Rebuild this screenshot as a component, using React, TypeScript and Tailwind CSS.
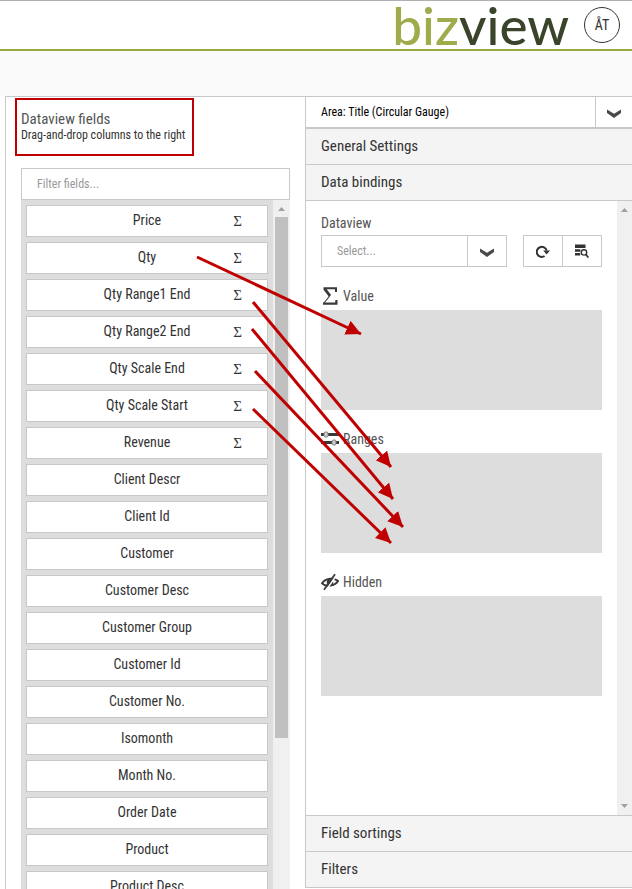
import React, { useState } from 'react';

interface Field {
  name: string;
  numeric?: boolean;
}

const FIELDS: Field[] = [
  { name: 'Price', numeric: true },
  { name: 'Qty', numeric: true },
  { name: 'Qty Range1 End', numeric: true },
  { name: 'Qty Range2 End', numeric: true },
  { name: 'Qty Scale End', numeric: true },
  { name: 'Qty Scale Start', numeric: true },
  { name: 'Revenue', numeric: true },
  { name: 'Client Descr' },
  { name: 'Client Id' },
  { name: 'Customer' },
  { name: 'Customer Desc' },
  { name: 'Customer Group' },
  { name: 'Customer Id' },
  { name: 'Customer No.' },
  { name: 'Isomonth' },
  { name: 'Month No.' },
  { name: 'Order Date' },
  { name: 'Product' },
  { name: 'Product Desc' },
];

// x1, y1, x2, y2
const ARROWS = [
  [197, 257, 361, 334],
  [253, 302, 391, 467],
  [252, 329, 393, 499],
  [255, 371, 403, 527],
  [253, 409, 391, 543],
];

const Chevron = () => (
  <svg width="14" height="9" viewBox="0 0 14 9" fill="#4a4a4a">
    <path d="M0 0.6 L7 4.8 L14 0.6 V4 L7 9 L0 4 Z" />
  </svg>
);

const SigmaIcon = () => (
  <svg width="18" height="18" viewBox="0 0 18 18" fill="none" stroke="#3a3a3a">
    <path d="M2.5 1.2 H15 V5" strokeWidth="2" />
    <path d="M3.5 1.6 L9 8.8" strokeWidth="2.8" />
    <path d="M9 8.5 L3 16" strokeWidth="1.2" />
    <path d="M2 16.6 H15.4 V13" strokeWidth="2.2" />
  </svg>
);

const SlidersIcon = () => (
  <svg width="18" height="18" viewBox="0 0 18 18">
    <path d="M0 4.5 H18 M0 12.5 H18" stroke="#3a3a3a" strokeWidth="3" />
    <rect x="3" y="2" width="4" height="5" rx="1.5" fill="#ccc" stroke="#777" />
    <rect x="11" y="10" width="4" height="5" rx="1.5" fill="#ccc" stroke="#777" />
  </svg>
);

const HiddenIcon = () => (
  <svg width="18" height="18" viewBox="0 0 18 18" fill="none" stroke="#3a3a3a">
    <path d="M1 10.4 C4 5.4 13 4 17 8 C14 13 5 14.5 1 10.4 Z" strokeWidth="2" />
    <circle cx="9" cy="9.2" r="3.2" fill="#3a3a3a" stroke="none" />
    <path d="M5 17.4 L15.4 2.4" stroke="#fff" strokeWidth="1.6" />
    <path d="M3 16.8 L14 1.2" strokeWidth="1.8" />
  </svg>
);

const RefreshIcon = () => (
  <svg width="14" height="14" viewBox="0 0 14 14">
    <path d="M8.6 12 A5 5 0 1 1 10.6 6.6" fill="none" stroke="#333" strokeWidth="2" />
    <path d="M7.2 6.4 H14 L10.6 10.6 Z" fill="#333" />
  </svg>
);

const PreviewIcon = () => (
  <svg width="14" height="14" viewBox="0 0 14 14">
    <path d="M0 0.6 H10.5 V4 H0 Z M0 5.2 H5.4 V7.8 H0 Z M0 9 H5.2 V11.6 H0 Z" fill="#333" />
    <circle cx="9" cy="8.4" r="2.7" fill="#fff" stroke="#333" strokeWidth="1.4" />
    <path d="M10.8 10.4 L13.4 13.6" stroke="#333" strokeWidth="1.7" />
  </svg>
);

interface SelectProps {
  label: string;
  value: string;
  options: string[];
  className: string;
  arrowClass: string;
}

const Select: React.FC<SelectProps> = ({ label, value, options, className, arrowClass }) => {
  const [selected, setSelected] = useState(value);
  return (
    <div className="relative flex-1">
      <select
        id={label}
        aria-label={label}
        value={selected}
        onChange={(e) => setSelected(e.target.value)}
        className={`block w-full appearance-none bg-white text-xs outline-none ${className}`}
      >
        {options.map((o) => (
          <option key={o}>{o}</option>
        ))}
      </select>
      <div
        className={`absolute inset-y-0 right-0 flex items-center justify-center pt-0.5 border-l border-[#c8c8c8] pointer-events-none ${arrowClass}`}
      >
        <Chevron />
      </div>
    </div>
  );
};

const Section: React.FC<{ title: string; className: string }> = ({ title, className }) => (
  <button
    className={`block w-full shrink-0 px-[15px] text-left text-[15px] bg-[#f4f4f4] border-[#c8c8c8] ${className}`}
  >
    {title}
  </button>
);

const DropZone: React.FC<{ title: string; icon: React.ReactNode }> = ({ title, icon }) => (
  <div className="mt-5">
    <div className="flex items-center gap-1 h-[18px] mb-[5px] text-sm text-[#555]">
      {icon}
      {title}
    </div>
    <div className="h-[100px] bg-[#ddd]" />
  </div>
);

const FieldList = () => {
  const [filter, setFilter] = useState('');
  const fields = FIELDS.filter((f) => f.name.toLowerCase().includes(filter.toLowerCase()));

  return (
    <section className="w-[300px] shrink-0 flex flex-col border-l border-[#c8c8c8]">
      <div className="self-start h-[58px] mt-px ml-[9px] pt-[11px] pl-1 pr-[7px] border-2 border-[#c00000]">
        <h2 className="text-[15px] leading-4 text-[#555]">Dataview fields</h2>
        <p className="text-xs leading-4">Drag-and-drop columns to the right</p>
      </div>
      <div className="flex-1 min-h-0 flex flex-col mt-3 mx-[15px]">
        <input
          type="text"
          aria-label="Filter fields"
          placeholder="Filter fields..."
          value={filter}
          onChange={(e) => setFilter(e.target.value)}
          className="h-8 shrink-0 px-[15px] text-xs border border-[#c8c8c8] outline-none placeholder:text-[#999]"
        />
        <div className="flex-1 min-h-0 flex">
          <ul className="flex-1 flex flex-col gap-[5px] p-[5px] bg-[#ddd] overflow-hidden">
            {fields.map((f) => (
              <li
                key={f.name}
                className="h-8 shrink-0 grid grid-cols-[1fr_auto_1fr] items-center bg-white border border-[#c8c8c8] text-sm cursor-grab"
              >
                <span className="col-start-2 pb-0.5">{f.name}</span>
                {f.numeric && (
                  <span className="justify-self-end mr-[25px] pt-0.5 text-[15px] font-['Liberation_Serif',serif]">Σ</span>
                )}
              </li>
            ))}
          </ul>
          <div className="w-[17px] flex flex-col items-center bg-[#f0f0f0]">
            <div className="h-[17px] flex items-center">
              <svg width="7" height="4" viewBox="0 0 7 4" fill="#a0a0a0">
                <path d="M0 4 L3.5 0 L7 4 Z" />
              </svg>
            </div>
            <div className="w-[13px] h-[521px] bg-[#c0c0c0]" />
          </div>
        </div>
      </div>
    </section>
  );
};

const Bindings = () => (
  <div className="flex-1 min-h-0 flex">
    <div className="flex-1 px-[15px] pt-[13px]">
      <label htmlFor="Dataview" className="block h-[18px] mb-[3px] text-sm leading-[18px] text-[#555]">
        Dataview
      </label>
      <div className="flex gap-4">
        <div className="flex-1 flex border border-[#c8c8c8]">
          <Select
            label="Dataview"
            value="Select..."
            options={['Select...']}
            className="h-[30px] pl-[15px] pr-10 text-[#999]"
            arrowClass="w-[39px]"
          />
        </div>
        <div className="flex w-[79px] h-8 border border-[#c8c8c8]">
          <button aria-label="Refresh" className="flex-1 flex items-center justify-center border-r border-[#c8c8c8]">
            <RefreshIcon />
          </button>
          <button aria-label="Preview data" className="flex-1 flex items-center justify-center">
            <PreviewIcon />
          </button>
        </div>
      </div>
      <DropZone title="Value" icon={<SigmaIcon />} />
      <DropZone title="Ranges" icon={<SlidersIcon />} />
      <DropZone title="Hidden" icon={<HiddenIcon />} />
    </div>
    <div className="w-[15px] flex flex-col items-center justify-between py-[7px] bg-[#f0f0f0]">
      <svg width="7" height="4" viewBox="0 0 7 4" fill="#a0a0a0">
        <path d="M0 4 L3.5 0 L7 4 Z" />
      </svg>
      <svg width="7" height="4" viewBox="0 0 7 4" fill="#a0a0a0">
        <path d="M0 0 L3.5 4 L7 0 Z" />
      </svg>
    </div>
  </div>
);

const Arrows = () => (
  <svg className="absolute top-0 left-0 pointer-events-none" width="632" height="889">
    <defs>
      <marker id="head" markerUnits="userSpaceOnUse" markerWidth="16" markerHeight="16" refX="15" refY="8" orient="auto">
        <path d="M0 0.5 L15 8 L0 15.5 Z" fill="#c00000" />
      </marker>
    </defs>
    {ARROWS.map(([x1, y1, x2, y2]) => (
      <line key={`${x1}-${y1}`} x1={x1} y1={y1} x2={x2} y2={y2} stroke="#c00000" strokeWidth="3" markerEnd="url(#head)" />
    ))}
  </svg>
);

export default function App() {
  return (
    <div className="relative h-screen flex flex-col overflow-hidden bg-white text-[#333] font-['Roboto_Condensed','Liberation_Sans_Narrow',Roboto,sans-serif]">
      <header className="h-[51px] shrink-0 flex items-center justify-end gap-[15px] pr-3 border-t border-t-[#b0b0b0] border-b-2 border-b-[#97a83e]">
        <div className="text-[53px] leading-[46px] font-medium text-[#39442a] font-[Lato,sans-serif]">
          <span className="text-[#a0ab4b]">biz</span>view
        </div>
        <button className="size-9 rounded-full border border-[#333] text-sm">ÅT</button>
      </header>
      <div className="h-[45px] shrink-0 bg-[#fafafa]" />
      <main className="flex-1 min-h-0 ml-[5px] flex border-t border-[#c8c8c8]">
        <FieldList />
        <section className="flex-1 flex flex-col mb-px border-l border-[#c8c8c8]">
          <div className="flex shrink-0 border-b-2 border-[#c8c8c8]">
            <Select
              label="Area"
              value="Area: Title (Circular Gauge)"
              options={['Area: Title (Circular Gauge)']}
              className="h-[30px] pl-[15px] pr-10 text-black"
              arrowClass="w-[37px]"
            />
          </div>
          <Section title="General Settings" className="h-9 border-b" />
          <Section title="Data bindings" className="h-9 border-b" />
          <Bindings />
          <Section title="Field sortings" className="h-9 border-t" />
          <Section title="Filters" className="h-[37px] border-y" />
        </section>
      </main>
      <Arrows />
    </div>
  );
}
